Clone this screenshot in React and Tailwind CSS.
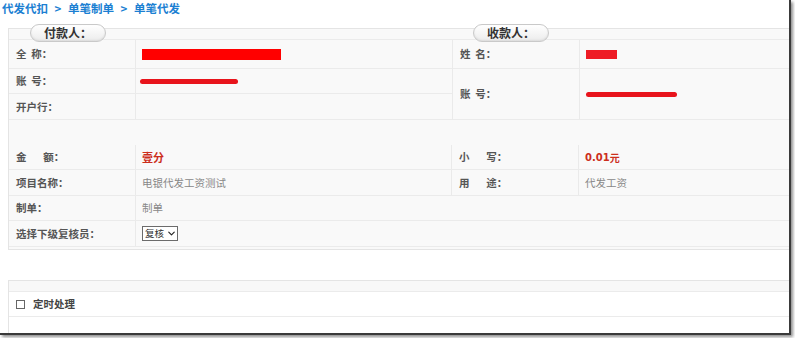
import { ChevronDown } from "lucide-react";

const font = { fontFamily: "'Noto Sans CJK SC', 'Noto Sans', sans-serif" };

const Pill = ({ children }) => (
    <div className="ml-[21px] -mt-[5px] w-[76px] h-[18px] rounded-full border border-[#c9c9c9] bg-gradient-to-b from-white to-[#ececec] shadow-[inset_0_-1px_2px_rgba(0,0,0,0.08)] flex items-center justify-center text-[12px] font-bold text-[#333] leading-none">
        {children}
    </div>
);

const Label = ({ children, w = "w-[127px]" }) => (
    <div className={`${w} shrink-0 h-full border-r border-[#eaeaea] pl-[7px] flex items-center text-[10.5px] font-bold text-[#555] whitespace-pre`}>
        {children}
    </div>
);

const Value = ({ children, className = "" }) => (
    <div className={`flex-1 h-full pl-[6px] flex items-center text-[10.5px] ${className}`}>{children}</div>
);

export default function App() {
    return (
        <div className="w-[795px] h-[338px] bg-white" style={font}>
            <div className="w-[791px] h-[335px] overflow-hidden bg-white border-r-[2px] border-b-[2px] border-[#3a3a3a] shadow-[2px_2px_3px_rgba(0,0,0,0.45)]">
                {/* breadcrumb */}
                <div className="h-[17px] pl-[2px] flex items-center gap-[6px] text-[11.5px] font-bold text-[#1b7fd2]">
                    <span>代发代扣</span>
                    <span className="w-[8px] text-center">&gt;</span>
                    <span>单笔制单</span>
                    <span className="w-[8px] text-center">&gt;</span>
                    <span>单笔代发</span>
                </div>

                {/* main box */}
                <div className="mt-[11px] ml-[8px] pb-[2px] border-t border-l border-b border-[#e4e4e4] bg-[#f9f9f9]">
                    <div className="flex">
                        {/* payer */}
                        <div className="w-[443px]">
                            <div className="h-[11px] flex items-start border-b border-[#ebebeb]">
                                <Pill>付款人：</Pill>
                            </div>
                            <div className="h-[29px] flex border-b border-[#ebebeb]">
                                <Label>{"全  称："}</Label>
                                <Value><div className="w-[139px] h-[11px] bg-[#ff0000]" /></Value>
                            </div>
                            <div className="h-[25px] flex border-b border-[#ebebeb]">
                                <Label>{"账  号："}</Label>
                                <Value className="!pl-[4px]"><div className="w-[98px] h-[5px] rounded-full bg-[#e8141c]" /></Value>
                            </div>
                            <div className="h-[26px] flex border-b border-[#ebebeb]">
                                <Label>开户行：</Label>
                                <Value />
                            </div>
                        </div>

                        {/* payee */}
                        <div className="flex-1">
                            <div className="h-[11px] flex items-start border-b border-[#ebebeb]">
                                <Pill>收款人：</Pill>
                            </div>
                            <div className="border-l border-[#eaeaea]">
                                <div className="h-[29px] flex border-b border-[#ebebeb]">
                                    <Label>{"姓  名："}</Label>
                                    <Value><div className="w-[31px] h-[9px] bg-[#ee1c25]" /></Value>
                                </div>
                                <div className="h-[51px] flex border-b border-[#ebebeb]">
                                    <Label>{"账  号："}</Label>
                                    <Value><div className="w-[91px] h-[5px] rounded-full bg-[#e8141c]" /></Value>
                                </div>
                            </div>
                        </div>
                    </div>

                    <div className="h-[25px]" />

                    <div className="h-[25px] flex border-b border-[#ebebeb]">
                        <div className="w-[443px] flex border-r border-[#eaeaea]">
                            <Label>{"金       额："}</Label>
                            <Value className="font-bold text-[#cc2e1c] text-[11px]">壹分</Value>
                        </div>
                        <div className="flex-1 flex">
                            <Label>{"小       写："}</Label>
                            <Value className="font-bold text-[#cc2e1c] text-[10px]">
                                <span style={{ fontFamily: "'DejaVu Sans', sans-serif" }}>0.01</span>元
                            </Value>
                        </div>
                    </div>
                    <div className="h-[26px] flex border-b border-[#ebebeb]">
                        <div className="w-[443px] flex border-r border-[#eaeaea]">
                            <Label>项目名称：</Label>
                            <Value className="text-[#888]">电银代发工资测试</Value>
                        </div>
                        <div className="flex-1 flex">
                            <Label>{"用       途："}</Label>
                            <Value className="text-[#888]">代发工资</Value>
                        </div>
                    </div>
                    <div className="h-[25px] flex border-b border-[#ebebeb]">
                        <Label>制单：</Label>
                        <Value className="text-[#888]">制单</Value>
                    </div>
                    <div className="h-[26px] flex border-b border-[#ebebeb]">
                        <Label>选择下级复核员：</Label>
                        <Value>
                            <div className="h-[15px] w-[36px] border border-[#6b6b6b] bg-white flex items-center pl-[2px] gap-[2px] text-[9.5px] text-[#333]">
                                <span>复核</span>
                                <ChevronDown size={11} strokeWidth={2.5} className="text-[#222]" />
                            </div>
                        </Value>
                    </div>
                </div>

                {/* second box */}
                <div className="mt-[30px] ml-[8px] border-t border-l border-[#e4e4e4] bg-white">
                    <div className="h-[11px] bg-[#f8f8f8] border-b border-[#ebebeb]" />
                    <div className="h-[25px] flex items-center pl-[7px] gap-[8px] border-b border-[#ebebeb]">
                        <div className="w-[9px] h-[9px] border border-[#666] bg-white" />
                        <span className="text-[10.5px] font-bold text-[#444]">定时处理</span>
                    </div>
                    <div className="h-[20px]" />
                </div>
            </div>
        </div>
    );
}
